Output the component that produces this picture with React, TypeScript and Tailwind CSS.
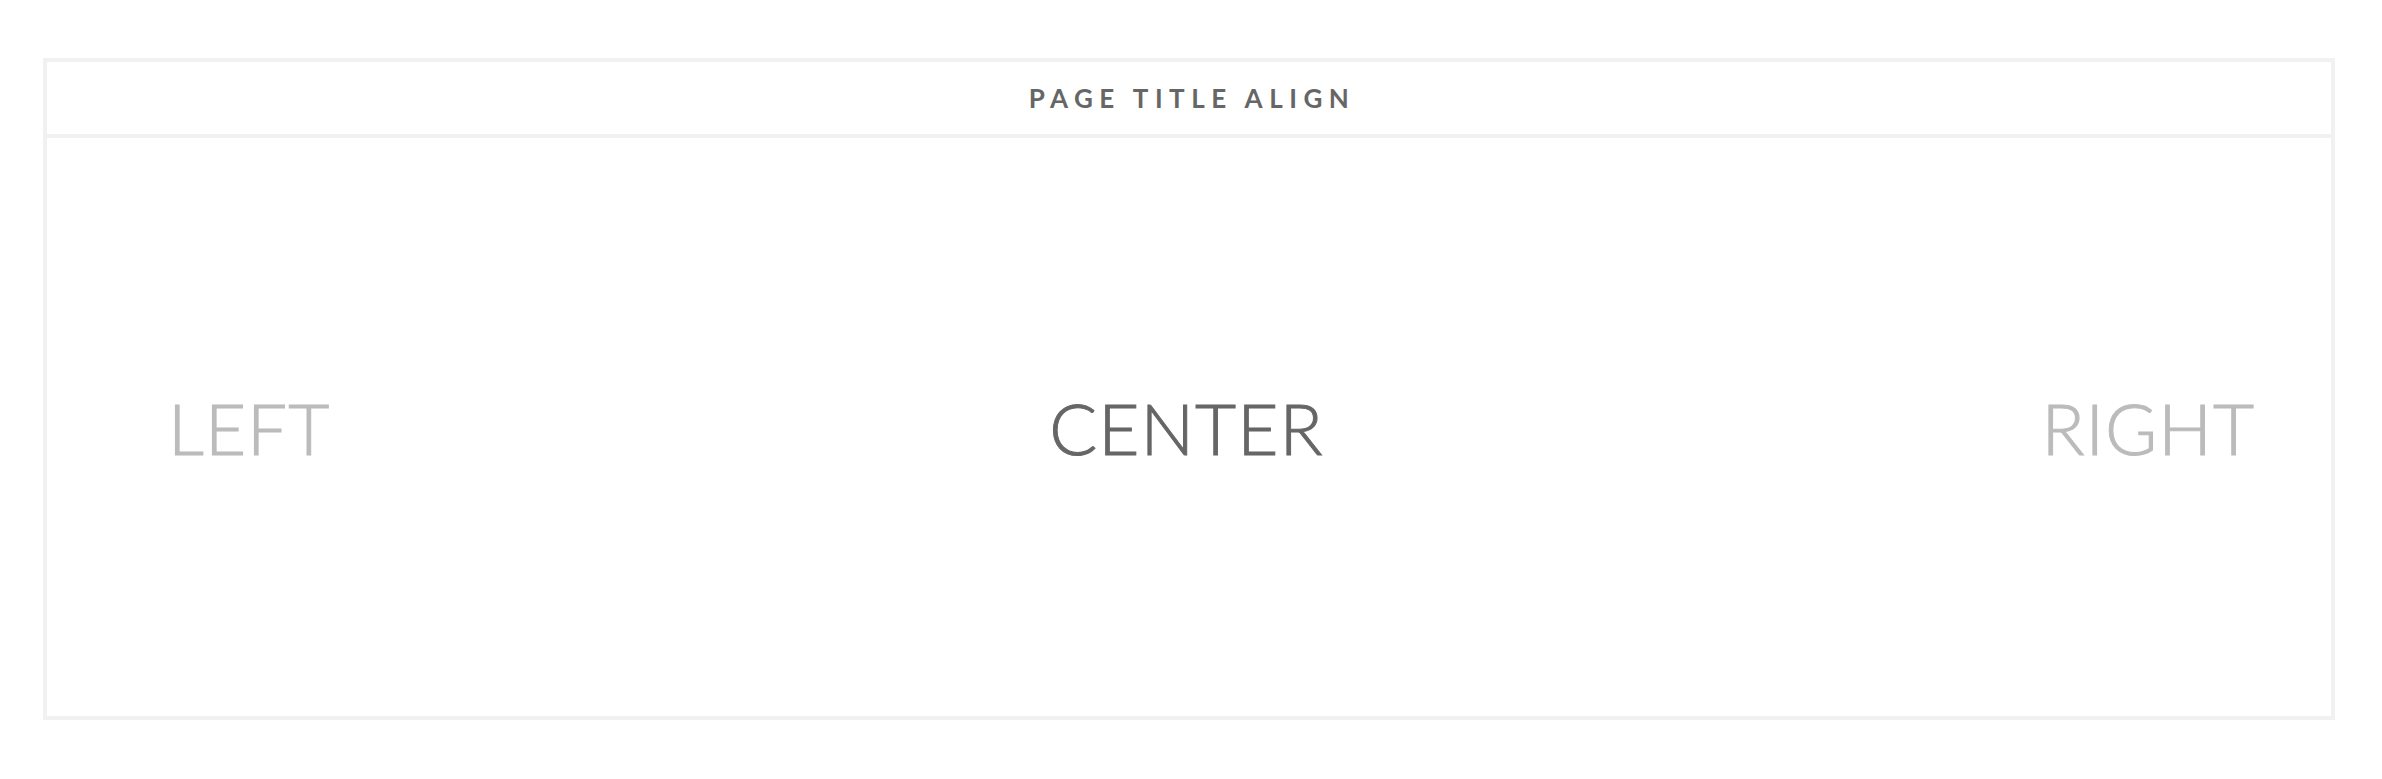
export default function App() {
  return (
    <div className="w-[2382px] h-[779px] bg-white pt-[58px] pl-[43px]" style={{ fontFamily: "Lato, 'Open Sans', sans-serif" }}>
      <div className="w-[2292px] h-[662px] border-[4px] border-[#f1f1f1] flex flex-col">
        <div className="h-[76px] border-b-[4px] border-[#f1f1f1] flex items-center justify-center shrink-0">
          <span className="text-[26px] font-bold tracking-[6.5px] text-[#666666] leading-none pl-[6px]">PAGE TITLE ALIGN</span>
        </div>
        <div className="flex-1 flex items-center justify-between pl-[121px] pr-[76px]">
          <span className="text-[71px] font-light tracking-[1px] text-[#bbbbbb] leading-none [-webkit-text-stroke:1px_#bbbbbb]">LEFT</span>
          <span className="text-[71px] font-light tracking-[1px] pl-[1px] text-[#666666] leading-none [-webkit-text-stroke:1px_#666666]">CENTER</span>
          <span className="text-[71px] font-light tracking-[1px] text-[#bbbbbb] leading-none [-webkit-text-stroke:1px_#bbbbbb]">RIGHT</span>
        </div>
      </div>
    </div>
  );
}
